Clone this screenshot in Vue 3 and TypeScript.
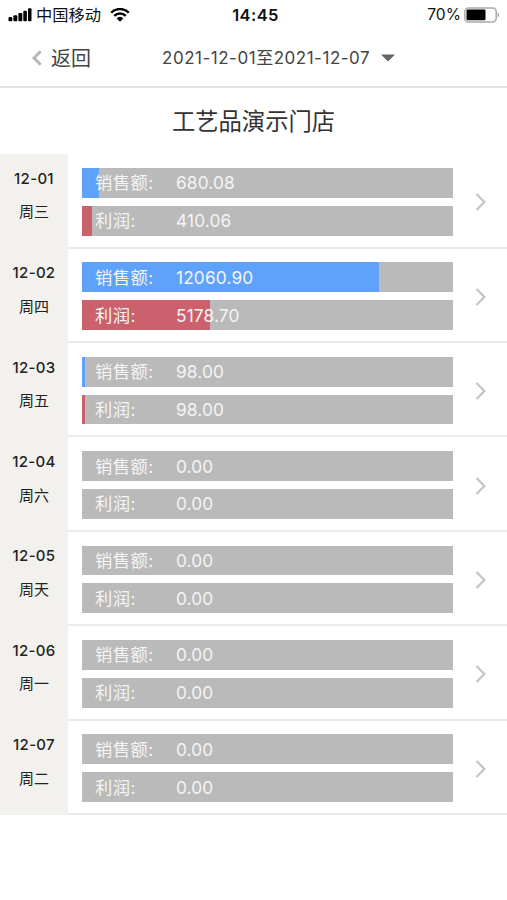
<script setup lang="ts">
interface Bar {
  label: string
  value: string
  width: number
  kind: 'sales' | 'profit'
}

interface Day {
  date: string
  weekday: string
  bars: Bar[]
}

function day(date: string, weekday: string, sales: string, salesWidth: number, profit: string, profitWidth: number): Day {
  return {
    date,
    weekday,
    bars: [
      { label: '销售额:', value: sales, width: salesWidth, kind: 'sales' },
      { label: '利润:', value: profit, width: profitWidth, kind: 'profit' },
    ],
  }
}

const days: Day[] = [
  day('12-01', '周三', '680.08', 4.5, '410.06', 2.7),
  day('12-02', '周四', '12060.90', 80, '5178.70', 34.4),
  day('12-03', '周五', '98.00', 0.8, '98.00', 0.8),
  day('12-04', '周六', '0.00', 0, '0.00', 0),
  day('12-05', '周天', '0.00', 0, '0.00', 0),
  day('12-06', '周一', '0.00', 0, '0.00', 0),
  day('12-07', '周二', '0.00', 0, '0.00', 0),
]
</script>

<template>
  <div class="screen">
    <div class="status">
      <div class="carrier">
        <svg class="signal" width="24" height="14" viewBox="0 0 24 14">
          <rect x="0.5" y="9" width="3.8" height="4.3" rx="1" />
          <rect x="5.4" y="7.2" width="3.9" height="6.1" rx="1" />
          <rect x="10.4" y="5" width="3.9" height="8.3" rx="1" />
          <rect x="15.3" y="2.7" width="3.6" height="10.6" rx="1" />
          <rect x="20" y="0.3" width="3.5" height="13" rx="1" />
        </svg>
        <span class="carrier-name">中国移动</span>
        <svg class="wifi" width="20" height="14" viewBox="0 0 20 14">
          <path d="M1.2 4.6a12.7 12.7 0 0 1 17.6 0" />
          <path d="M4.2 7.8a8.4 8.4 0 0 1 11.6 0" />
          <path class="wifi-dot" d="M6.6 10.3a5 5 0 0 1 6.8 0L10 13.8z" />
        </svg>
      </div>
      <span class="clock">14:45</span>
      <div class="power">
        <span>70%</span>
        <svg width="36" height="16" viewBox="0 0 36 16">
          <rect x="0.8" y="0.9" width="31.4" height="14" rx="3.6" fill="#fff" stroke="#aaa" stroke-width="1.5" />
          <rect x="2.5" y="2.6" width="19" height="10.6" rx="1.2" fill="#000" />
          <path d="M33.7 5.5c1.7.5 1.7 4.3 0 4.8z" fill="#999" />
        </svg>
      </div>
    </div>

    <header class="nav">
      <button class="back" type="button">
        <svg width="12" height="16" viewBox="0 0 12 16">
          <path d="M9.7 1.3 3 8l6.7 6.7" fill="none" stroke="#b8b8b8" stroke-width="3" />
        </svg>
        <span>返回</span>
      </button>
      <div class="range">
        <span>2021-12-01至2021-12-07</span>
        <svg width="14" height="8" viewBox="0 0 14 8"><path d="M0 0.5h14L7 7.6z" fill="#666" /></svg>
      </div>
    </header>

    <h1 class="store">工艺品演示门店</h1>

    <main>
      <section v-for="item in days" :key="item.date" class="row">
        <div class="day">
          <span class="date">{{ item.date }}</span>
          <span class="weekday">{{ item.weekday }}</span>
        </div>
        <div class="detail">
          <div class="bars">
            <div v-for="bar in item.bars" :key="bar.kind" class="bar">
              <div class="fill" :class="bar.kind" :style="{ width: bar.width + '%' }"></div>
              <span class="label">{{ bar.label }}</span>
              <span class="value">{{ bar.value }}</span>
            </div>
          </div>
          <svg class="arrow" width="12" height="18" viewBox="0 0 12 18">
            <path d="M1.5 1 9.4 9l-7.9 8" fill="none" stroke="#c4c4c4" stroke-width="2.2" />
          </svg>
        </div>
      </section>
    </main>
  </div>
</template>

<style>
body {
  background: #fff;
}
</style>

<style scoped>
.screen {
  width: 507px;
  height: 900px;
  overflow: hidden;
  background: #fff;
  color: #333;
  font-family: Inter, 'Noto Sans CJK SC', sans-serif;
}
.status {
  display: grid;
  grid-template-columns: 1fr auto 1fr;
  align-items: center;
  box-sizing: border-box;
  height: 29px;
  padding: 0 8px;
  color: #111;
  font-size: 16px;
  line-height: 20px;
}
.carrier,
.power {
  display: flex;
  align-items: center;
}
.carrier-name {
  margin: 0 9px 0 4px;
  font-size: 16.3px;
}
.wifi path {
  fill: none;
  stroke: #000;
  stroke-width: 2.4;
}
.wifi .wifi-dot {
  fill: #000;
  stroke: none;
}
.clock {
  padding-left: 4px;
  font-weight: 600;
  font-size: 16.5px;
  letter-spacing: 0.4px;
}
.power {
  justify-content: flex-end;
  gap: 3px;
  font-size: 15.6px;
}
.power svg {
  margin-right: -1px;
}
.nav {
  display: flex;
  align-items: center;
  box-sizing: border-box;
  height: 59px;
  padding-left: 31px;
  border-bottom: 2px solid #e2e2e2;
}
.back {
  display: flex;
  align-items: center;
  gap: 8px;
  width: 131px;
  padding: 0;
  border: 0;
  background: none;
  color: #444;
  font: inherit;
  font-size: 20px;
  line-height: 28px;
}
.back span {
  padding-top: 2px;
}
.range {
  display: flex;
  align-items: center;
  gap: 11px;
  color: #444;
  font-size: 17px;
  letter-spacing: 0.52px;
  line-height: 24px;
  white-space: nowrap;
}
.store {
  margin: 0;
  height: 66.3px;
  font-size: 23.3px;
  font-weight: 400;
  line-height: 68px;
  text-align: center;
}
.row {
  display: flex;
  height: 94.4px;
}
.day {
  display: flex;
  flex-direction: column;
  align-items: center;
  box-sizing: border-box;
  width: 68px;
  padding-top: 14.6px;
  background: #f2f1ed;
  color: #222;
  font-size: 15px;
  line-height: 20px;
  letter-spacing: 0.4px;
}
.date {
  font-weight: 500;
  letter-spacing: 0.3px;
}
.weekday {
  margin-top: 13.6px;
  font-size: 15px;
  letter-spacing: 0;
}
.detail {
  display: flex;
  flex: 1;
  align-items: flex-start;
  box-sizing: border-box;
  padding: 13.7px 0 0 14px;
  border-bottom: 2px solid #ebebeb;
}
.bars {
  display: grid;
  grid-template-rows: 29.8px 29.8px;
  gap: 8px;
  width: 371px;
}
.bar {
  position: relative;
  display: flex;
  align-items: center;
  box-sizing: border-box;
  padding: 1px 0 0 13px;
  background: #bababa;
  color: #f4f4f4;
  font-size: 17.3px;
  line-height: 28px;
}
.fill {
  position: absolute;
  inset: 0 auto 0 0;
}
.sales {
  background: #5ea2fb;
}
.profit {
  background: #cb616c;
}
.label,
.value {
  position: relative;
}
.label {
  width: 81px;
  letter-spacing: 0.5px;
}
.value {
  letter-spacing: 0.15px;
}
.arrow {
  margin: 25.4px 0 0 22px;
}
</style>
